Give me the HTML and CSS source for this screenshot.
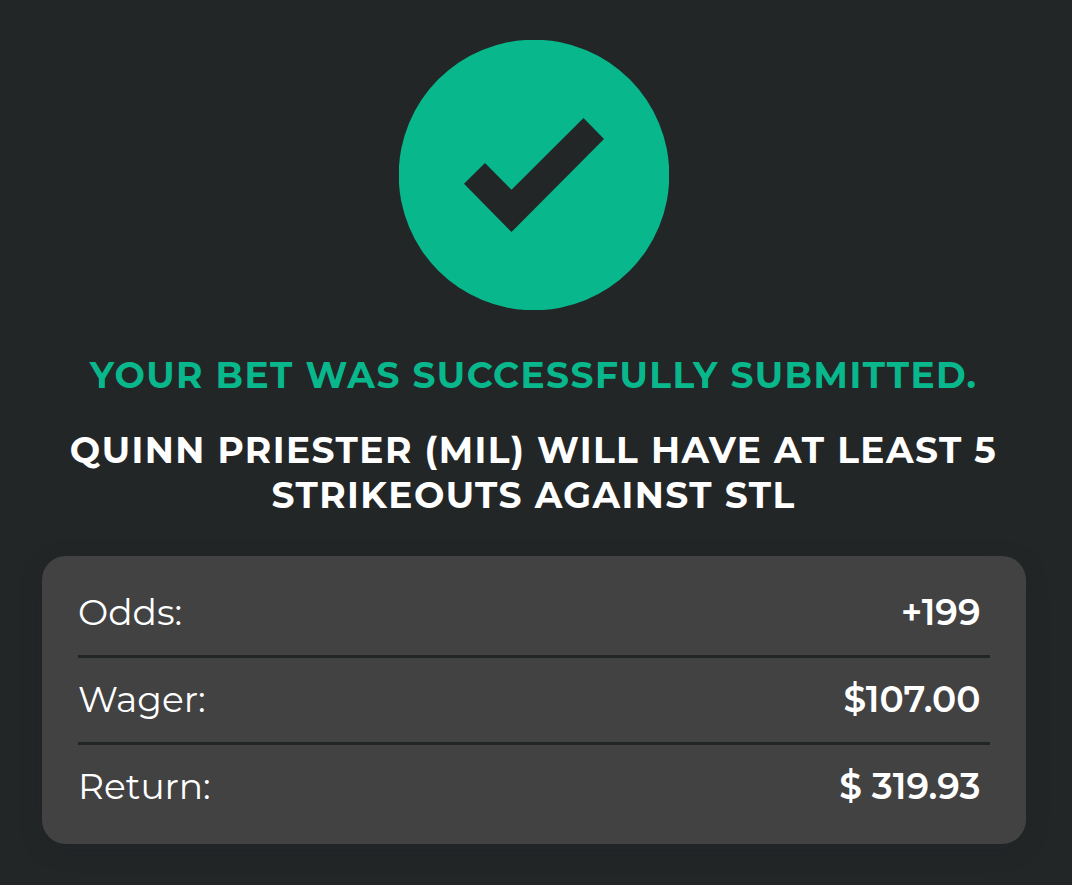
FILE: index.html
```
<!DOCTYPE html>
<html lang="en">
<head>
<meta charset="utf-8">
<title>Bet submitted</title>
<link rel="stylesheet" href="styles.css">
</head>
<body>
<main class="confirmation">
  <svg class="check" viewBox="0 0 270 270" aria-hidden="true">
    <circle cx="135" cy="135" r="135.3" fill="#08b78c"/>
    <path d="M65 143.7 86 123 112.5 149.7 184.5 78 205 99 112.5 192Z" fill="#232627"/>
  </svg>
  <h1 class="status">YOUR BET WAS SUCCESSFULLY SUBMITTED.</h1>
  <h2 class="bet">QUINN PRIESTER (MIL) WILL HAVE AT LEAST 5<br>STRIKEOUTS AGAINST STL</h2>
  <dl class="card">
    <div class="row"><dt class="label">Odds:</dt><dd class="value">+199</dd></div>
    <div class="row"><dt class="label">Wager:</dt><dd class="value">$107.00</dd></div>
    <div class="row"><dt class="label">Return:</dt><dd class="value">$ 319.93</dd></div>
  </dl>
</main>
</body>
</html>
```
FILE: styles.css
```
* { box-sizing: border-box; }
body {
  margin: 0;
  background: #232627;
  color: #fff;
  font-family: Montserrat, Inter, sans-serif;
}
.confirmation {
  height: 885px;
  padding: 40px 46px 0 42px;
  overflow: hidden;
}
.check { display: block; width: 270px; height: 270px; margin: 0 auto; }
.status, .bet {
  margin: 0 -20px;
  padding-right: 1px;
  font-size: 36px;
  line-height: 45px;
  font-weight: 700;
  text-align: center;
  white-space: nowrap;
  letter-spacing: .04em;
}
.status { margin-top: 43px; color: #08b78c; }
.bet { margin-top: 30px; }
.card {
  height: 288px;
  margin: 38px 0 0;
  padding: 15px 36px;
  border-radius: 24px;
  background: #424242;
  box-shadow: 0 6px 24px rgba(28, 32, 33, .2);
}
.row {
  display: flex;
  justify-content: space-between;
  align-items: center;
  height: 87px;
  padding: 0 9.5px 3px 0;
  border-bottom: 3px solid #232627;
}
.row:last-child { border-bottom-color: transparent; }
.label { font-size: 36px; font-weight: 400; }
.value { margin: 0; font-size: 36px; font-weight: 600; }
```
